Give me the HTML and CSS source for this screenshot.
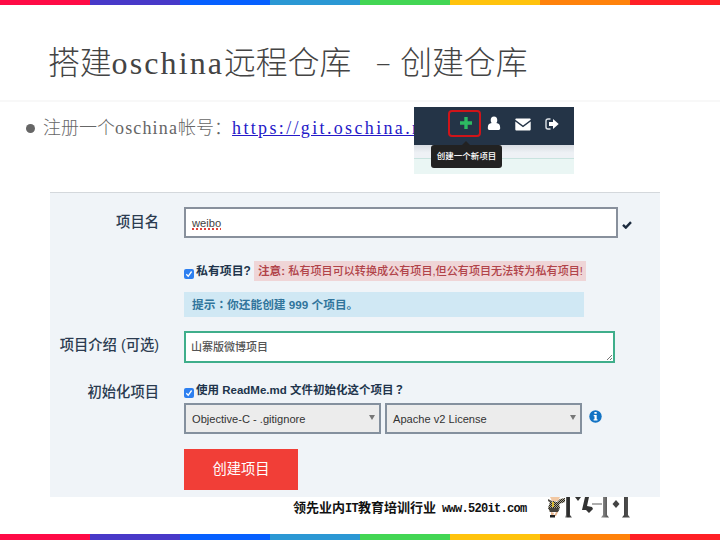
FILE: index.html
```html
<!DOCTYPE html>
<html lang="zh-CN">
<head>
<meta charset="utf-8">
<title>搭建oschina远程仓库 – 创建仓库</title>
<link rel="stylesheet" href="styles.css">
</head>
<body>
<main class="slide">
  <div class="stripe stripe-top"><i class="c1"></i><i class="c2"></i><i class="c3"></i><i class="c4"></i><i class="c5"></i><i class="c6"></i><i class="c7"></i><i class="c8"></i></div>
  <header class="title"><h1>搭建<span class="latin">oschina</span>远程仓库<span class="dash">–</span>创建仓库</h1></header>
  <section class="intro">
    <span class="bullet"></span>
    <p>注册一个<span class="latin">oschina</span>帐号：<a class="link" href="#">https://git.oschina.net</a></p>
    <div class="toolbar-shot">
      <nav class="toolbar">
        <span class="plus"><svg width="14" height="14" viewBox="0 0 14 14"><path d="M5.3 1h3.4v4.3H13v3.4H8.700V13H5.300V8.700H1V5.300h4.300z" fill="#2dba62"/></svg></span>
        <svg class="user" width="14" height="15" viewBox="0 0 14 15"><path d="M7 .6c2.200 0 3.300 1.600 3.300 3.600 0 1.200-.4 2.200-1 2.900 2.600.2 3.900 1.700 3.900 4.800 0 1.400-.8 2.100-1.900 2.100H2.700C1.600 14 .8 13.300 .8 11.900c0-3.100 1.300-4.600 3.900-4.800-.6-.7-1-1.700-1-2.900C3.700 2.200 4.800.6 7 .6z" fill="#fff"/></svg>
        <svg class="mail" width="16" height="13" viewBox="0 0 16 13"><path d="M.3 1.700C.3.800.8.400 1.600.400h12.800c.8 0 1.300.4 1.300 1.300L8 7.600z" fill="#fff"/><path d="M.3 3.400L8 9.300l7.700-5.900v7.800c0 .8-.5 1.300-1.300 1.300H1.600c-.8 0-1.300-.5-1.300-1.300z" fill="#fff"/></svg>
        <svg class="exit" width="14" height="12" viewBox="0 0 14 12"><path d="M5.500 1H3C1.800 1 1 1.800 1 3v6c0 1.200.8 2 2 2h2.500" fill="none" stroke="#dfe4e9" stroke-width="1.400"/><path d="M4 4h4V1l5.700 5L8 11V8H4z" fill="#fff"/></svg>
      </nav>
      <div class="below"></div>
      <div class="mint"></div>
      <div class="tooltip">创建一个新项目</div>
    </div>
  </section>
  <section class="panel">
    <div class="row name-row">
      <div class="label">项目名</div>
      <div class="field"><div class="input"><span class="typo">weibo</span></div>
      <svg class="tick" width="10" height="8" viewBox="0 0 10 8"><path d="M1 3.900l2.800 2.700L9 1.200" fill="none" stroke="#1c2b3e" stroke-width="2.400"/></svg></div>
    </div>
    <div class="row private-row">
      <div class="label"></div>
      <div class="field"><span class="checkbox"><svg width="10" height="10" viewBox="0 0 10 10"><path d="M2.300 5.300l1.900 2L7.600 2.500" fill="none" stroke="#fff" stroke-width="1.300"/></svg></span><b class="private">私有项目?</b><span class="warning"><b>注意:</b> <span class="warn-text">私有项目可以转换成公有项目,但公有项目无法转为私有项目!</span></span></div>
    </div>
    <div class="row hint-row">
      <div class="label"></div>
      <div class="hint">提示<span class="centered" lang="zh-TW">：</span>你还能创建 999 个项目。</div>
    </div>
    <div class="row desc-row">
      <div class="label">项目介绍 (可选)</div>
      <div class="textarea">山寨版微博项目<svg class="grip" width="7" height="7" viewBox="0 0 7 7"><path d="M1 6l5-5M4 6l2-2" stroke="#777" fill="none"/></svg></div>
    </div>
    <div class="row init-row">
      <div class="label">初始化项目</div>
      <div class="field"><span class="checkbox"><svg width="10" height="10" viewBox="0 0 10 10"><path d="M2.300 5.300l1.900 2L7.600 2.500" fill="none" stroke="#fff" stroke-width="1.300"/></svg></span><b class="readme">使用 ReadMe.md 文件初始化这个项目<span class="centered" lang="zh-TW">？</span></b></div>
    </div>
    <div class="row select-row">
      <div class="label"></div>
      <div class="field">
        <div class="select"><span>Objective-C - .gitignore</span><i class="arrow"></i></div>
        <div class="select"><span>Apache v2 License</span><i class="arrow"></i></div>
        <svg class="info" width="13" height="13" viewBox="0 0 13 13"><circle cx="6.500" cy="6.500" r="6.200" fill="#1273c4"/><path d="M5.400 2h2.300v1.800H5.400zM4.700 5h3v4.200h.8v1.300H4.600V9.200h.9V6.300h-.8z" fill="#fff"/></svg>
      </div>
    </div>
    <div class="row">
      <div class="label"></div>
      <div class="button">创建项目</div>
    </div>
  </section>
  <footer class="footer">
    <p class="company">领先业内<span class="mono">IT</span>教育培训行业<span class="mono site">www.520it.com</span></p>
    <svg class="logo" width="86" height="22" viewBox="0 0 86 22">
      <defs><linearGradient id="bar"><stop offset="0" stop-color="#999"/><stop offset=".4" stop-color="#222"/><stop offset="1" stop-color="#555"/></linearGradient>
      <pattern id="plaid" width="2" height="2" patternUnits="userSpaceOnUse"><path d="M0 0h2v2H0z" fill="#aaa593"/><path d="M0 0h1v1H0zM1 1h1v1H1z" fill="#25221d"/></pattern></defs>
      <path d="M5 0h10l-2 4H7z" fill="#f2c8a3"/><path d="M3 2l4 2-1 2-3-2z" fill="#55504a"/>
      <path d="M5 5l3-1 4 1 3-3 5-1v4l-6 2 1 4-2 4H5L3 11z" fill="url(#plaid)"/>
      <path d="M4 11h10l-1 4H5z" fill="#45423c"/><path d="M7 5h2v5H7z" fill="#d8b932"/>
      <path d="M6 15l3 1-1 3H6zm5 0h2l-2 4H9z" fill="#e6b58d"/><path d="M5 18h5v2.500H5z" fill="#222"/>
      <path d="M21 0h4v18l2 2.500h-7l1-2.500z" fill="url(#bar)"/>
      <path d="M30 0h6l-3 4zM40 0h4l-2 9 5 1 1 2-4 4-3-3h-4z" fill="#333"/>
      <path d="M47 7h10" stroke="#777" stroke-width="1.200"/>
      <path d="M58 0h4v18l2 2.500h-8l2-2.500zM79 0h4v18l2 2.500h-8l2-2.500z" fill="url(#bar)"/>
      <path d="M71 3l3.500 4-3.500 4-3.500-4z" fill="#444"/>
    </svg>
  </footer>
  <div class="stripe stripe-bottom"><i class="c1"></i><i class="c2"></i><i class="c3"></i><i class="c4"></i><i class="c5"></i><i class="c6"></i><i class="c7"></i><i class="c8"></i></div>
</main>
</body>
</html>
```
FILE: styles.css
```css
* { box-sizing: border-box; }
body { margin: 0; background: #fff; }
h1, p { margin: 0; }
svg { display: block; flex: none; }

.slide {
  width: 720px;
  height: 540px;
  display: flex;
  flex-direction: column;
  overflow: hidden;
  font-family: "Liberation Sans", "Noto Sans CJK SC", sans-serif;
}

.stripe { display: grid; grid-template-columns: repeat(8, 90px); flex: none; }
.stripe-top { height: 5px; }
.stripe-bottom { height: 6px; }
.c1 { background: #ff0b46; }
.c2 { background: #4839c8; }
.c3 { background: #0660ff; }
.c4 { background: #2b98d4; }
.c5 { background: #43d654; }
.c6 { background: #ffc30d; }
.c7 { background: #ff820b; }
.c8 { background: #ff2026; }

.title {
  height: 97px;
  flex: none;
  padding: 28px 0 0 48px;
  border-bottom: 2px solid #f8f8f8;
}
.title h1 {
  font: 300 31.8px/54px "Noto Sans CJK SC", sans-serif;
  color: #444;
  white-space: nowrap;
}
.title .latin { font: 32px "Liberation Serif", serif; letter-spacing: 2.1px; }
.dash {
  display: inline-block;
  width: 49px;
  padding-left: 26px;
  font: 24px/24px "Liberation Serif", serif;
  vertical-align: 4px;
}

.intro {
  position: relative;
  height: 90px;
  flex: none;
  display: flex;
  align-items: flex-start;
  padding: 11px 0 0 26px;
}
.bullet { width: 9px; height: 9px; border-radius: 50%; background: #666; margin: 11px 8px 0 0; }
.intro p {
  font: 300 18px/26px "Noto Sans CJK SC", sans-serif;
  color: #666;
  white-space: nowrap;
}
.intro .latin { font: 18px "Liberation Serif", serif; letter-spacing: 1.15px; }
.link {
  font: 18px "Liberation Serif", serif;
  letter-spacing: 2.35px;
  color: #2519c8;
  text-decoration: underline;
}

.toolbar-shot {
  position: absolute;
  left: 414px;
  top: 5px;
  width: 160px;
  height: 67px;
  display: flex;
  flex-direction: column;
}
.toolbar { height: 38px; background: #243447; display: flex; align-items: flex-start; padding: 3px 0 0 34px; }
.plus {
  width: 33px;
  height: 27px;
  border: 2px solid #d01419;
  border-radius: 4px;
  display: flex;
  padding: 4px 0 0 9px;
}
.user { margin: 6px 0 0 6px; }
.mail { margin: 8px 0 0 14px; }
.exit { margin: 8px 0 0 14px; }
.below { height: 14px; background: linear-gradient(#d8dde3, #eef1f5 60%); border-bottom: 1px solid #c9e3df; }
.mint { flex: 1; background: #eaf6f4; }
.tooltip {
  position: absolute;
  left: 17px;
  top: 38px;
  width: 71px;
  height: 23px;
  border-radius: 3px;
  background: #222;
  color: #fff;
  font-size: 8.5px;
  font-weight: 500;
  line-height: 23px;
  text-align: center;
  white-space: nowrap;
}
.tooltip::before {
  content: "";
  position: absolute;
  left: 31px;
  top: -4px;
  border: 4px solid transparent;
  border-top: 0;
  border-bottom-color: #222;
}

.panel {
  width: 610px;
  height: 305px;
  flex: none;
  margin-left: 50px;
  padding-top: 14px;
  background: #f0f4f8;
  border-top: 1px solid #d4d8dc;
}
.row { display: grid; grid-template-columns: 109px auto; column-gap: 25px; justify-content: start; }
.label { text-align: right; font-size: 14.3px; font-weight: 500; line-height: 20px; color: #2b3b50; white-space: nowrap; }
.field { display: flex; align-items: center; white-space: nowrap; }
.name-row { height: 54px; }
.name-row .label { padding-top: 5px; }
.name-row .field { height: 31px; }
.input {
  width: 434px;
  height: 31px;
  border: 2px solid #88909c;
  background: #fff;
  padding-left: 6px;
  font-size: 11.2px;
  line-height: 28px;
  color: #444;
}
.typo { text-decoration: underline dotted #e0443c 1.5px; text-underline-offset: 1px; }
.tick { margin: 4px 0 0 4px; }
.private-row { height: 31px; }
.private-row .field { height: 20px; }
.checkbox { width: 10px; height: 10px; border-radius: 2px; background: #2d7ff0; margin: 4px 2px 0 0; flex: none; }
.private-row .checkbox { margin-top: 5px; }
.private { width: 58px; font-size: 11.9px; line-height: 18px; padding-bottom: 1px; color: #21344c; }
.warning {
  width: 332px;
  height: 20px;
  padding-left: 4px;
  background: #efd5d7;
  color: #b14349;
  font-size: 11.6px;
  line-height: 20px;
}
.warn-text { font-weight: 500; font-size: 11.1px; }
.hint-row { height: 39px; }
.hint {
  width: 400px;
  height: 25px;
  padding-left: 8px;
  background: #d0e8f4;
  color: #31759c;
  font-size: 11.7px;
  font-weight: bold;
  line-height: 25px;
}
.centered { font-family: "Noto Sans CJK TC", sans-serif; line-height: 1; }
.desc-row { height: 50px; }
.desc-row .label { padding-top: 4px; }
.textarea {
  position: relative;
  width: 431px;
  height: 32px;
  border: 2px solid #3fae8b;
  background: #fff;
  padding-left: 5px;
  font-size: 11px;
  font-weight: 500;
  line-height: 28px;
  color: #555;
}
.grip { position: absolute; right: 0; bottom: 0; }
.init-row { height: 22px; }
.init-row .label { padding-top: 1px; }
.init-row .field { height: 20px; }
.readme { font-size: 11.5px; line-height: 18px; padding-bottom: 2px; color: #21344c; }
.select-row { height: 46px; }
.select-row .field { height: 31px; gap: 4px; }
.select {
  width: 197px;
  height: 31px;
  border: 2px solid #84909e;
  background: #ececec;
  padding: 0 4px 0 6px;
  display: flex;
  justify-content: space-between;
  font-size: 11.1px;
  line-height: 28px;
  color: #333;
}
.arrow { margin-top: 10px; height: 0; border: 3px solid transparent; border-top: 5px solid #777; border-bottom: 0; }
.info { margin: -4px 0 0 3px; }
.button {
  width: 114px;
  height: 41px;
  background: #f13e37;
  color: #fff;
  font-size: 14.3px;
  line-height: 41px;
  text-align: center;
}

.footer { flex: 1; display: flex; padding-left: 293px; }
.company {
  width: 252px;
  font: bold 13px/19px "Noto Sans CJK SC", sans-serif;
  color: #111;
  white-space: nowrap;
}
.mono { font: bold 12px "Liberation Mono", monospace; letter-spacing: -0.7px; }
.site { margin-left: 6px; }
```
